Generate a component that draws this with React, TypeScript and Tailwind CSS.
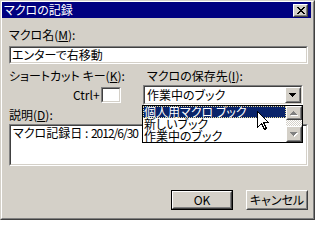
import React from "react";

function Raised({ className, children }: { className: string; children?: React.ReactNode }) {
  return (
    <div className={"border border-t-white border-l-white border-r-[#404040] border-b-[#404040] " + className}>
      <div className="w-full h-full border border-t-[#d4d0c8] border-l-[#d4d0c8] border-r-[#808080] border-b-[#808080] bg-[#d4d0c8] flex items-center justify-center">
        {children}
      </div>
    </div>
  );
}

function Sunken({ className, innerClassName, children }: { className: string; innerClassName?: string; children?: React.ReactNode }) {
  return (
    <div className={"border border-t-[#808080] border-l-[#808080] border-r-white border-b-white " + className}>
      <div className={"w-full h-full border border-t-[#404040] border-l-[#404040] border-r-[#d4d0c8] border-b-[#d4d0c8] bg-white " + (innerClassName ?? "")}>
        {children}
      </div>
    </div>
  );
}

const DOWN = "M0 0h7v1H0z M1 1h5v1H1z M2 2h3v1H2z M3 3h1v1H3z";
const UP = "M3 0h1v1H3z M2 1h3v1H2z M1 2h5v1H1z M0 3h7v1H0z";

function Arrow({ d, disabled }: { d: string; disabled?: boolean }) {
  return (
    <svg width="8" height="5" viewBox="0 0 8 5" shapeRendering="crispEdges">
      {disabled ? (
        <>
          <path d={d} fill="#ffffff" transform="translate(1 1)" />
          <path d={d} fill="#808080" />
        </>
      ) : (
        <path d={d} fill="#000000" />
      )}
    </svg>
  );
}

export default function App() {
  return (
    <div className="w-[315px] h-[220px] relative overflow-hidden bg-[#d4d0c8] [font-family:'Noto_Sans_CJK_JP',sans-serif] [font-feature-settings:'palt'] text-[12px] leading-[12px] text-black">
      <div className="w-full h-full border border-t-[#d4d0c8] border-l-[#d4d0c8] border-r-[#404040] border-b-[#404040]">
        <div className="w-full h-full flex flex-col border border-t-white border-l-white border-r-[#808080] border-b-[#808080]">
          {/* Title bar */}
          <div className="h-[16px] mr-[2px] bg-[#000080] flex items-center justify-between">
            <span className="ml-[2px] text-white whitespace-nowrap">マクロの記録</span>
            <Raised className="mr-[3px] w-[15px] h-[13px]">
              <svg width="8" height="7" viewBox="0 0 8 7" shapeRendering="crispEdges">
                <path
                  d="M0 0h2v1H0z M6 0h2v1H6z M1 1h2v1H1z M5 1h2v1H5z M2 2h4v1H2z M3 3h2v1H3z M2 4h4v1H2z M1 5h2v1H1z M5 5h2v1H5z M0 6h2v1H0z M6 6h2v1H6z"
                  fill="#000000"
                />
              </svg>
            </Raised>
          </div>

          {/* Content */}
          <div className="flex flex-col pl-[7px] pr-[5px]">
            <div className="mt-[11px] whitespace-nowrap">
              マクロ名(<span className="underline">M</span>):
            </div>
            <Sunken className="mt-[5px] h-[18px]" innerClassName="flex items-center pl-[1px]">
              <span className="whitespace-nowrap">エンターで右移動</span>
            </Sunken>

            <div className="mt-[6px] grid grid-cols-[134px_160px]">
              <div className="whitespace-nowrap">
                ショートカット キー(<span className="underline">K</span>):
              </div>
              <div className="pl-[4px] whitespace-nowrap">
                マクロの保存先(<span className="underline">I</span>):
              </div>
            </div>

            <div className="mt-[3px] grid grid-cols-[134px_160px]">
              <div className="flex items-center h-[18px] mt-[1px]">
                <span className="ml-[64px] w-[28px] whitespace-nowrap">Ctrl+</span>
                <Sunken className="w-[20px] h-[16px]" />
              </div>
              <Sunken className="h-[20px]" innerClassName="flex items-center">
                <span className="flex-1 pl-[2px] whitespace-nowrap">作業中のブック</span>
                <Raised className="w-[16px] h-[16px]">
                  <Arrow d={DOWN} />
                </Raised>
              </Sunken>
            </div>

            <div className="mt-[4px] whitespace-nowrap">
              説明(<span className="underline">D</span>):
            </div>
            <Sunken className="mt-[3px] h-[42px]" innerClassName="pt-[1px] pl-[2px]">
              <span className="whitespace-nowrap">
                マクロ記録日 : <span className="tracking-[-1px]">2012/6/30</span>
              </span>
            </Sunken>

            <div className="mt-[24px] flex justify-end gap-[13px]">
              <div className="w-[62px] h-[20px] border border-black">
                <Raised className="w-full h-full">
                  <span>OK</span>
                </Raised>
              </div>
              <Raised className="w-[62px] h-[20px]">
                <span className="whitespace-nowrap">キャンセル</span>
              </Raised>
            </div>
          </div>
        </div>
      </div>

      {/* Dropdown list */}
      <div className="absolute left-[142px] top-[105px] w-[161px] h-[38px] border border-black bg-white z-10 flex">
        <div className="flex-1 flex flex-col">
          <div className="h-[12px] bg-[#0a246a] text-white outline outline-1 outline-dotted outline-[#e8dc9a] -outline-offset-1 pl-[1px] flex items-center whitespace-nowrap">
            個人用マクロ ブック
          </div>
          <div className="h-[12px] pl-[1px] flex items-center whitespace-nowrap">新しいブック</div>
          <div className="h-[12px] pl-[1px] flex items-center whitespace-nowrap">作業中のブック</div>
        </div>
        <div className="w-[16px] flex flex-col">
          <Raised className="h-[14px]">
            <Arrow d={UP} disabled />
          </Raised>
          <div className="h-[6px] [background-image:repeating-conic-gradient(#ffffff_0_25%,#d4d0c8_0_50%)] [background-size:2px_2px]" />
          <Raised className="h-[16px]">
            <Arrow d={DOWN} disabled />
          </Raised>
        </div>
      </div>

      {/* Mouse cursor */}
      <svg className="absolute left-[257px] top-[111px] z-20" width="13" height="20" viewBox="0 0 13 20">
        <path
          d="M0.5 0.5 L0.5 16.5 L4.5 12.5 L7.5 18.5 L9.5 17.5 L6.5 11.5 L11.5 11.5 Z"
          fill="#ffffff"
          stroke="#000000"
          strokeWidth="1"
          shapeRendering="crispEdges"
        />
      </svg>
    </div>
  );
}
